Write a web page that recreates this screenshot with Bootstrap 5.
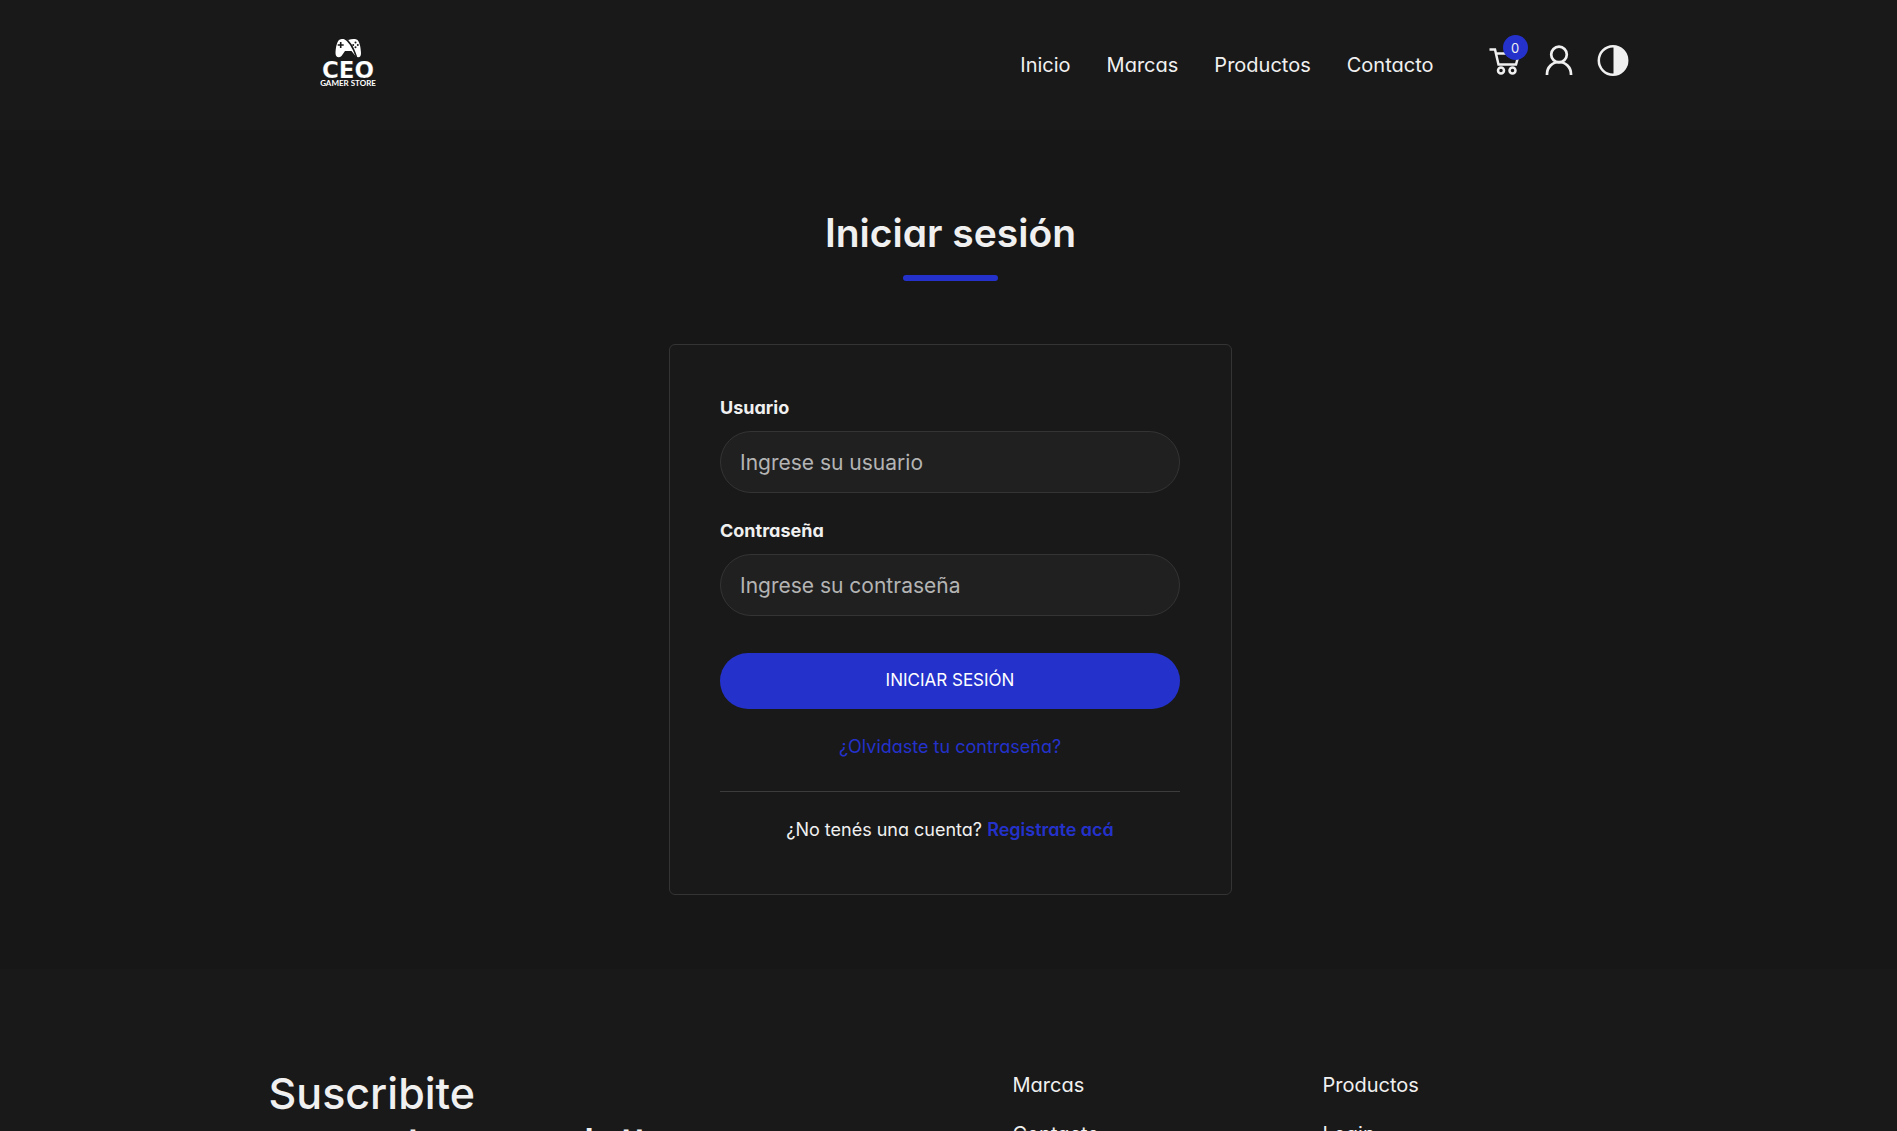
<!DOCTYPE html>
<html lang="es">
<head>
<meta charset="utf-8">
<meta name="viewport" content="width=device-width, initial-scale=1">
<title>Iniciar sesión - CEO Gamer Store</title>
<link href="https://cdn.jsdelivr.net/npm/bootstrap@5.3.0/dist/css/bootstrap.min.css" rel="stylesheet">
<style>
:root { --ink: #f0f0f0; --brand: #2432cb; --panel: #191919; --line: #343434; }
body { background: #171717; color: var(--ink); font-family: Inter, "Open Sans", sans-serif; font-feature-settings: "cv11"; font-size: 18px; line-height: 28px; }
a { color: inherit; text-decoration: none; }
.site-header { background: var(--panel); min-height: 130px; padding-top: 37px; }
.header-inner { max-width: 1364px; padding: 0 3px 0 51px; }
.main-nav { font-size: 20px; gap: 36px; margin: 14px 54px 0 0; }
.header-icons { gap: 20px; margin-top: 6px; }
.header-icons a, .header-icons button { width: 34px; height: 34px; color: var(--ink); }
.cart-count { width: 25px; height: 25px; top: -8px; left: 15px; background: var(--brand); font-size: 13px; }
.page-title { font-size: 39px; line-height: 48px; font-weight: 600; }
.title-bar { width: 95px; height: 6px; border-radius: 3px; background: var(--brand); margin-top: 18px; }
.login-area { padding: 79px 0 74px; }
.login-box { max-width: 563px; padding: 49px 51px 50px 50px; background: var(--panel); border: 1px solid var(--line); border-radius: 6px; margin-top: 63px; }
.login-box .form-label { font-weight: 700; font-size: 18px; margin-bottom: 9px; }
.login-box .form-control { height: 62px; border-radius: 31px; padding: 0 19px; font-size: 21px; background: #202020; border-color: var(--line); color: var(--ink); }
.login-box .form-control::placeholder { color: #b4b4b4; opacity: 1; font-weight: 400; }
.login-btn { height: 56px; border-radius: 28px; background: var(--brand); color: #fff; font-size: 17px; margin-top: 37px; }
.login-btn:hover { background: #1d29ad; color: #fff; }
.brand-link { color: var(--brand); }
.login-box hr { border-color: #3c3c3c; opacity: 1; margin: 30px 0 24px; }
.site-footer { background: var(--panel); padding: 99px 0; }
.footer-inner { max-width: 1364px; }
.footer-lead { flex: 6; }
.footer-links { flex: 2.5; font-size: 20px; gap: 21px; padding-top: 3px; }
.footer-title { font-size: 43px; line-height: 50px; font-weight: 500; }
.clipped-page { height: 100vh; overflow: hidden; }
</style>
</head>
<body class="clipped-page">
<header class="site-header ps-1">
  <div class="header-inner mx-auto d-flex align-items-start">
    <a href="#" class="me-auto d-flex" aria-label="CEO Gamer Store">
      <svg width="56" height="50" viewBox="0 0 56 50" fill="#fff">
        <path d="M20 2.500C23 1.700 25 2 28.200 3 31.500 2 34 1.700 36.500 2.500 39.500 3.500 40.700 10 41 16 41 20.500 38.500 21.500 35.500 19L31.500 14H25L21.500 19C19 21.500 15.500 20.500 15.500 16 15.800 10 17 3.500 20 2.500z"/>
        <path d="M20.700 5v6M17.700 8h6" stroke="#191919" stroke-width="1.600"/>
        <path d="M24 1c6 3 9 9 12.500 19" stroke="#191919" stroke-width="1.400" fill="none"/>
        <g fill="#191919"><circle cx="35.500" cy="5.600" r="1"/><circle cx="35.500" cy="10.200" r="1"/><circle cx="33.200" cy="7.900" r="1"/><circle cx="37.800" cy="7.900" r="1"/></g>
        <text x="28" y="41" text-anchor="middle" font-family="DejaVu Sans" font-weight="700" font-size="23" stroke="#191919" stroke-width=".2">CEO</text>
        <text x="28" y="49" text-anchor="middle" font-family="Lato" font-weight="700" font-size="8">GAMER STORE</text>
      </svg>
    </a>
    <nav class="main-nav d-flex" aria-label="Principal">
      <a href="#">Inicio</a><a href="#">Marcas</a><a href="#">Productos</a><a href="#">Contacto</a>
    </nav>
    <div class="header-icons d-flex">
      <a href="#" class="position-relative" aria-label="Carrito">
        <svg class="d-block" width="34" height="34" viewBox="0 0 34 34" fill="none" stroke="currentColor" stroke-width="2.500"><path d="M1.500 6.500H7l3.500 15h17.500l3-11H9"/><circle cx="13" cy="27.500" r="3"/><circle cx="24.500" cy="27.500" r="3"/></svg>
        <span class="cart-count position-absolute rounded-circle d-flex align-items-center justify-content-center">0</span>
      </a>
      <a href="#" aria-label="Mi cuenta">
        <svg class="d-block" width="34" height="34" viewBox="0 0 34 34" fill="none" stroke="currentColor" stroke-width="2.700"><circle cx="17" cy="11.500" r="7.800"/><path d="M5 32v-1a12 12 0 0 1 24 0v1"/></svg>
      </a>
      <button type="button" class="btn p-0 border-0 d-flex" aria-label="Cambiar tema">
        <svg width="34" height="34" viewBox="0 0 34 34"><circle cx="17" cy="17.500" r="14.200" fill="none" stroke="currentColor" stroke-width="2.500"/><path d="M17.500 3a14.500 14.500 0 0 1 0 29z" fill="currentColor"/></svg>
      </button>
    </div>
  </div>
</header>
<main class="login-area ps-1">
  <h1 class="page-title text-center mb-0">Iniciar sesión</h1>
  <div class="title-bar mx-auto"></div>
  <form class="login-box mx-auto">
    <div class="mb-4">
      <label class="form-label d-block" for="user">Usuario</label>
      <input class="form-control" id="user" type="text" placeholder="Ingrese su usuario">
    </div>
    <div>
      <label class="form-label d-block" for="pass">Contraseña</label>
      <input class="form-control" id="pass" type="password" placeholder="Ingrese su contraseña">
    </div>
    <button class="login-btn btn w-100 mb-4" type="submit">INICIAR SESIÓN</button>
    <p class="text-center mb-0"><a href="#" class="brand-link">¿Olvidaste tu contraseña?</a></p>
    <hr>
    <p class="text-center mb-0">¿No tenés una cuenta? <a href="#" class="brand-link fw-semibold">Registrate acá</a></p>
  </form>
</main>
<footer class="site-footer ps-1">
  <div class="footer-inner mx-auto d-flex">
    <div class="footer-lead"><h2 class="footer-title mb-0">Suscribite<br>a nuestro newsletter</h2></div>
    <div class="footer-links d-flex flex-column"><a href="#">Marcas</a><a href="#">Contacto</a></div>
    <div class="footer-links d-flex flex-column"><a href="#">Productos</a><a href="#">Login</a></div>
  </div>
</footer>
<script src="https://cdn.jsdelivr.net/npm/bootstrap@5.3.0/dist/js/bootstrap.bundle.min.js"></script>
</body>
</html>
